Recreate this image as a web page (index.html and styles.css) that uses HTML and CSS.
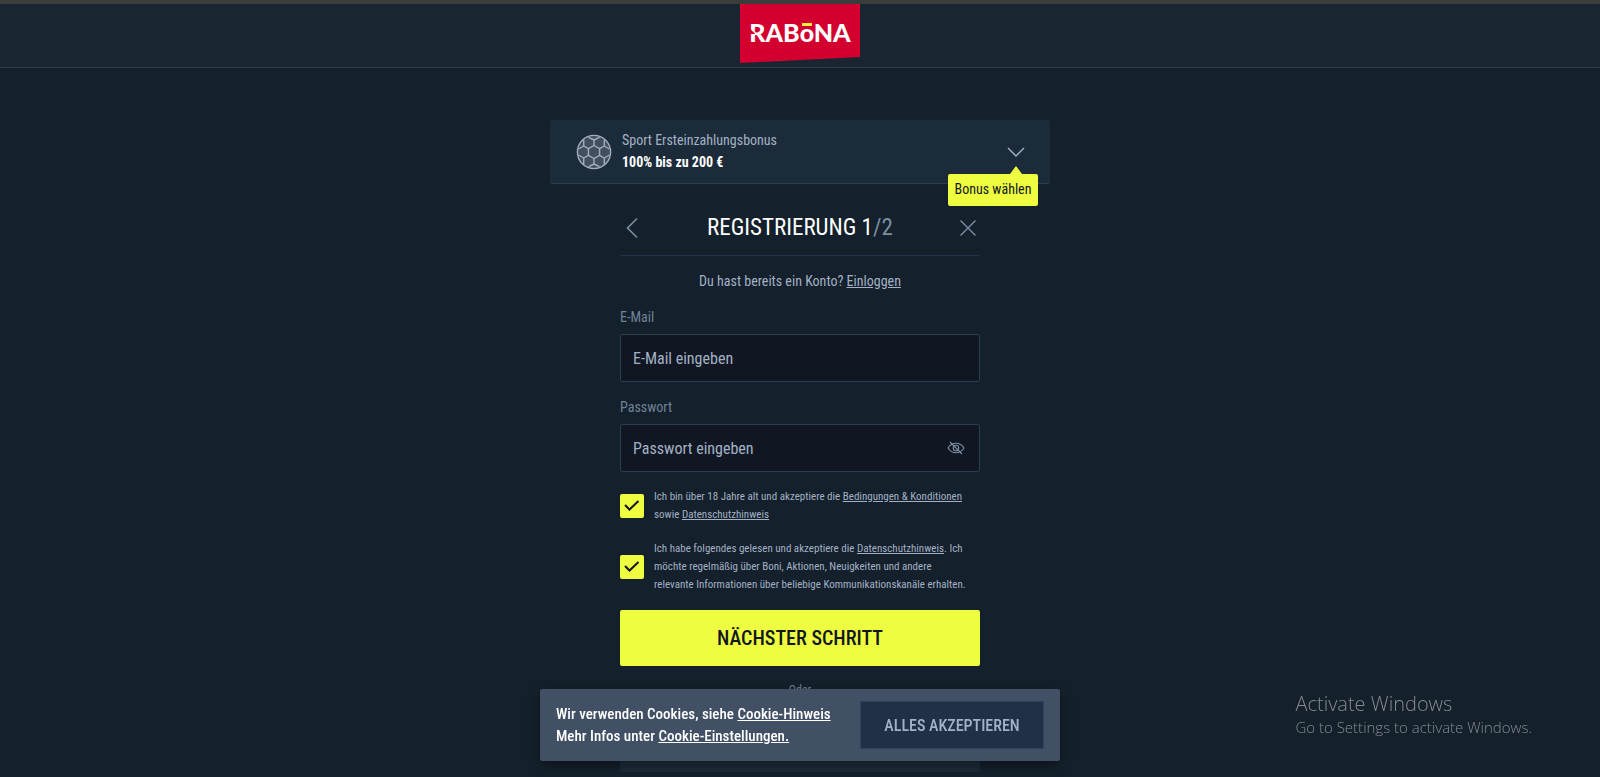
FILE: index.html
```html
<!DOCTYPE html>
<html lang="de">
<head>
  <meta charset="utf-8">
  <meta name="viewport" content="width=device-width, initial-scale=1.0">
  <title>Rabona - Registrierung</title>
  <link rel="stylesheet" href="styles.css">
</head>
<body>
  <header class="header">
    <a class="logo" href="#" aria-label="Rabona">
      <span class="logo-text">RAB<span class="logo-o">o</span>NA</span>
    </a>
  </header>

  <main class="page">
    <section class="bonus">
      <svg class="bonus-ball" viewBox="0 0 36 36" fill="none" stroke="#a0adbd" stroke-width="1.4">
        <circle cx="18" cy="18" r="16.6" fill="#434f5d"/>
        <path d="M18 11.5l5.6 3.2v6.6L18 24.5l-5.6-3.2v-6.6z"/>
        <path d="M18 11.5V6M23.6 14.7l4.7-2.7M23.6 21.3l4.7 2.7M18 24.5V30M12.4 21.3L7.7 24M12.4 14.7L7.7 12"/>
        <path d="M18 6l-5.4-2.7M18 6l5.4-2.7M28.3 12V5.5M28.3 12l5.2 3M28.3 24l5.2-3M28.3 24v6.5M18 30l5.4 2.7M18 30l-5.4 2.7M7.7 24v6.5M7.7 24l-5.2-3M7.7 12l-5.2 3M7.7 12V5.5"/>
      </svg>
      <div class="bonus-text">
        <span>Sport Ersteinzahlungsbonus</span>
        <strong>100% bis zu 200 €</strong>
      </div>
      <button type="button" class="bonus-toggle" aria-label="Bonus wählen">
        <svg width="18" height="18" viewBox="0 0 18 18" fill="none" stroke="#a3b1c6" stroke-width="1.4">
          <path d="M1 5l8 8 8-8"/>
        </svg>
      </button>
      <div class="tooltip">Bonus wählen</div>
    </section>

    <form class="form">
      <div class="form-head">
        <button type="button" class="icon-btn" aria-label="Zurück">
          <svg width="24" height="24" viewBox="0 0 24 24" fill="none" stroke="#7d8ea3" stroke-width="1.6">
            <path d="M17 2.5L7.5 12l9.500 9.500"/>
          </svg>
        </button>
        <h1>Registrierung 1<span>/2</span></h1>
        <button type="button" class="icon-btn" aria-label="Schließen">
          <svg width="24" height="24" viewBox="0 0 24 24" fill="none" stroke="#7d8ea3" stroke-width="1.4">
            <path d="M4.500 4.500l15 15M19.500 4.500l-15 15"/>
          </svg>
        </button>
      </div>

      <p class="login">Du hast bereits ein Konto? <a href="#">Einloggen</a></p>

      <label class="label" for="email">E-Mail</label>
      <input class="input" type="email" id="email" name="email" placeholder="E-Mail eingeben">

      <label class="label" for="password">Passwort</label>
      <div class="password">
        <input class="input" type="password" id="password" name="password" placeholder="Passwort eingeben">
        <button type="button" class="eye" aria-label="Passwort anzeigen">
          <svg width="18" height="14" viewBox="0 0 18 14" fill="none" stroke="#7d8ea3" stroke-width="1.1">
            <path d="M1 7c2-3.200 4.600-4.800 8-4.800S15 3.800 17 7c-2 3.200-4.600 4.800-8 4.800S3 10.200 1 7z"/>
            <circle cx="9" cy="7" r="2.800"/>
            <path d="M3 1l12 12M7.500 5.500l3 3"/>
          </svg>
        </button>
      </div>

      <div class="check">
        <input type="checkbox" id="terms" checked>
        <label for="terms">Ich bin über 18 Jahre alt und akzeptiere die <a href="#">Bedingungen &amp; Konditionen</a> sowie <a href="#">Datenschutzhinweis</a></label>
      </div>
      <div class="check">
        <input type="checkbox" id="news" checked>
        <label for="news">Ich habe folgendes gelesen und akzeptiere die <a href="#">Datenschutzhinweis</a>. Ich möchte regelmäßig über Boni, Aktionen, Neuigkeiten und andere<br> relevante Informationen über beliebige Kommunikationskanäle erhalten.</label>
      </div>

      <button type="submit" class="submit">Nächster Schritt</button>
      <p class="or">Oder</p>
      <div class="social"></div>
    </form>
  </main>

  <div class="cookies">
    <p>Wir verwenden Cookies, siehe <a href="#">Cookie-Hinweis</a><br>Mehr Infos unter <a href="#">Cookie-Einstellungen.</a></p>
    <button type="button">Alles akzeptieren</button>
  </div>

  <div class="watermark">
    <p class="watermark-title">Activate Windows</p>
    <p>Go to Settings to activate Windows.</p>
  </div>
</body>
</html>
```
FILE: styles.css
```css
* {
  box-sizing: border-box;
}

body {
  margin: 0;
  background-color: #14202b;
  color: #a3b1c6;
  font-family: "Roboto Condensed", "Liberation Sans Narrow", Roboto, sans-serif;
  font-size: 14px;
}

p,
h1 {
  margin: 0;
}

a {
  color: inherit;
}

button {
  font-family: inherit;
  cursor: pointer;
}

.header {
  display: flex;
  justify-content: center;
  align-items: flex-start;
  height: 68px;
  background-color: #192632;
  border-top: 4px solid #3c3c3c;
  border-bottom: 1px solid #2c3d50;
}

.logo {
  display: flex;
  justify-content: center;
  width: 120px;
  height: 59px;
  padding-top: 13px;
  background-color: #d3002f;
  clip-path: polygon(0 0, 100% 0, 100% 53px, 0 100%);
  color: #fff;
  font-family: Lato, sans-serif;
  font-size: 25px;
  font-weight: 900;
  line-height: 30px;
  text-decoration: none;
}

.logo-text {
  position: relative;
}

/* notch in the stem of the R */
.logo-text::before {
  content: "";
  position: absolute;
  top: 11px;
  left: 0;
  width: 6px;
  height: 6px;
  background-color: #d3002f;
  clip-path: polygon(0 0, 100% 100%, 0 100%);
}

.logo-o {
  position: relative;
}

.logo-o::before {
  content: "";
  position: absolute;
  top: 6px;
  left: 2px;
  right: 2px;
  height: 3px;
  background-color: #f0f03c;
}

.page {
  padding: 52px 16px 5px;
}

.bonus {
  position: relative;
  display: flex;
  align-items: center;
  max-width: 500px;
  height: 64px;
  margin: 0 auto;
  padding: 0 25px 0 26px;
  background-color: #1c2b39;
  border-bottom: 1px solid #2c3d50;
  border-radius: 2px;
}

.bonus-ball {
  width: 36px;
  height: 36px;
}

.bonus-text {
  display: flex;
  flex: 1;
  flex-direction: column;
  margin-left: 10px;
  padding-bottom: 2px;
  line-height: 22px;
}

.bonus-text strong {
  color: #fff;
}

.bonus-toggle,
.icon-btn,
.eye {
  display: flex;
  padding: 0;
  background: none;
  border: 0;
}

.tooltip {
  position: absolute;
  top: 54px;
  right: 12px;
  width: 90px;
  padding-bottom: 2px;
  background-color: #effd40;
  border-radius: 2px;
  color: #111822;
  line-height: 30px;
  text-align: center;
}

.tooltip::before {
  content: "";
  position: absolute;
  top: -8px;
  right: 16px;
  border: 6px solid transparent;
  border-top: 0;
  border-bottom: 8px solid #effd40;
}

.form {
  max-width: 360px;
  margin: 0 auto;
}

.form-head {
  display: flex;
  justify-content: space-between;
  align-items: center;
  height: 72px;
  padding-top: 16px;
  border-bottom: 1px solid #223349;
}

.form-head h1 {
  color: #fff;
  font-size: 23px;
  font-weight: 400;
  text-transform: uppercase;
}

.form-head h1 span {
  color: #7d8ea3;
}

.login {
  margin-top: 14px;
  line-height: 22px;
  text-align: center;
}

.label {
  display: block;
  margin-top: 14px;
  padding-bottom: 6px;
  color: #718296;
  line-height: 22px;
}

.input {
  display: block;
  width: 100%;
  height: 48px;
  padding: 0 12px;
  background-color: #111722;
  border: 1px solid #2c3d50;
  border-radius: 2px;
  outline: none;
  color: #fff;
  font-family: inherit;
  font-size: 16px;
}

.input::placeholder {
  color: #a3b1c6;
  opacity: 1;
}

.password {
  position: relative;
}

.password .input {
  padding-right: 48px;
}

.eye {
  position: absolute;
  top: 17px;
  right: 15px;
}

.check {
  display: flex;
  align-items: center;
  gap: 10px;
  margin-top: 16px;
  font-size: 11px;
  line-height: 18px;
}

.check input {
  flex-shrink: 0;
  width: 24px;
  height: 24px;
  margin: 0;
  appearance: none;
  background: #effd40 url("data:image/svg+xml,%3Csvg xmlns='http://www.w3.org/2000/svg' viewBox='0 0 24 24' fill='none' stroke='%23111722' stroke-width='2'%3E%3Cpath d='M5 11l4.500 4.500L18.500 7'/%3E%3C/svg%3E") center;
  border-radius: 2px;
}

.submit {
  display: block;
  width: 100%;
  height: 56px;
  margin-top: 16px;
  background-color: #effd40;
  border: 0;
  border-radius: 2px;
  color: #111722;
  font-size: 20px;
  font-weight: 500;
  text-transform: uppercase;
}

.or {
  margin-top: 16px;
  color: #718296;
  font-size: 12px;
  line-height: 16px;
  text-align: center;
}

.social {
  height: 74px;
  background-color: #1c2b39;
  border-radius: 2px;
}

.cookies {
  position: fixed;
  bottom: 16px;
  left: 0;
  right: 0;
  display: flex;
  justify-content: space-between;
  align-items: center;
  max-width: 520px;
  height: 72px;
  margin: 0 auto;
  padding: 0 16px;
  background-color: #415065;
  border-radius: 2px;
  box-shadow: 0 4px 12px rgba(0, 0, 0, 0.4);
  color: #fff;
  font-size: 15px;
  font-weight: 500;
  line-height: 22px;
}

.cookies button {
  width: 184px;
  height: 48px;
  background-color: #213047;
  border: 1px solid #2f4058;
  border-radius: 2px;
  color: #a3b1c6;
  font-size: 16px;
  font-weight: 500;
  text-transform: uppercase;
}

.watermark {
  position: fixed;
  right: 68px;
  bottom: 40px;
  color: #858a8f;
  font-family: "Open Sans", "Noto Sans", sans-serif;
  font-size: 15px;
  font-weight: 300;
  line-height: 20px;
}

.watermark-title {
  font-size: 20px;
  line-height: 26px;
}
```
